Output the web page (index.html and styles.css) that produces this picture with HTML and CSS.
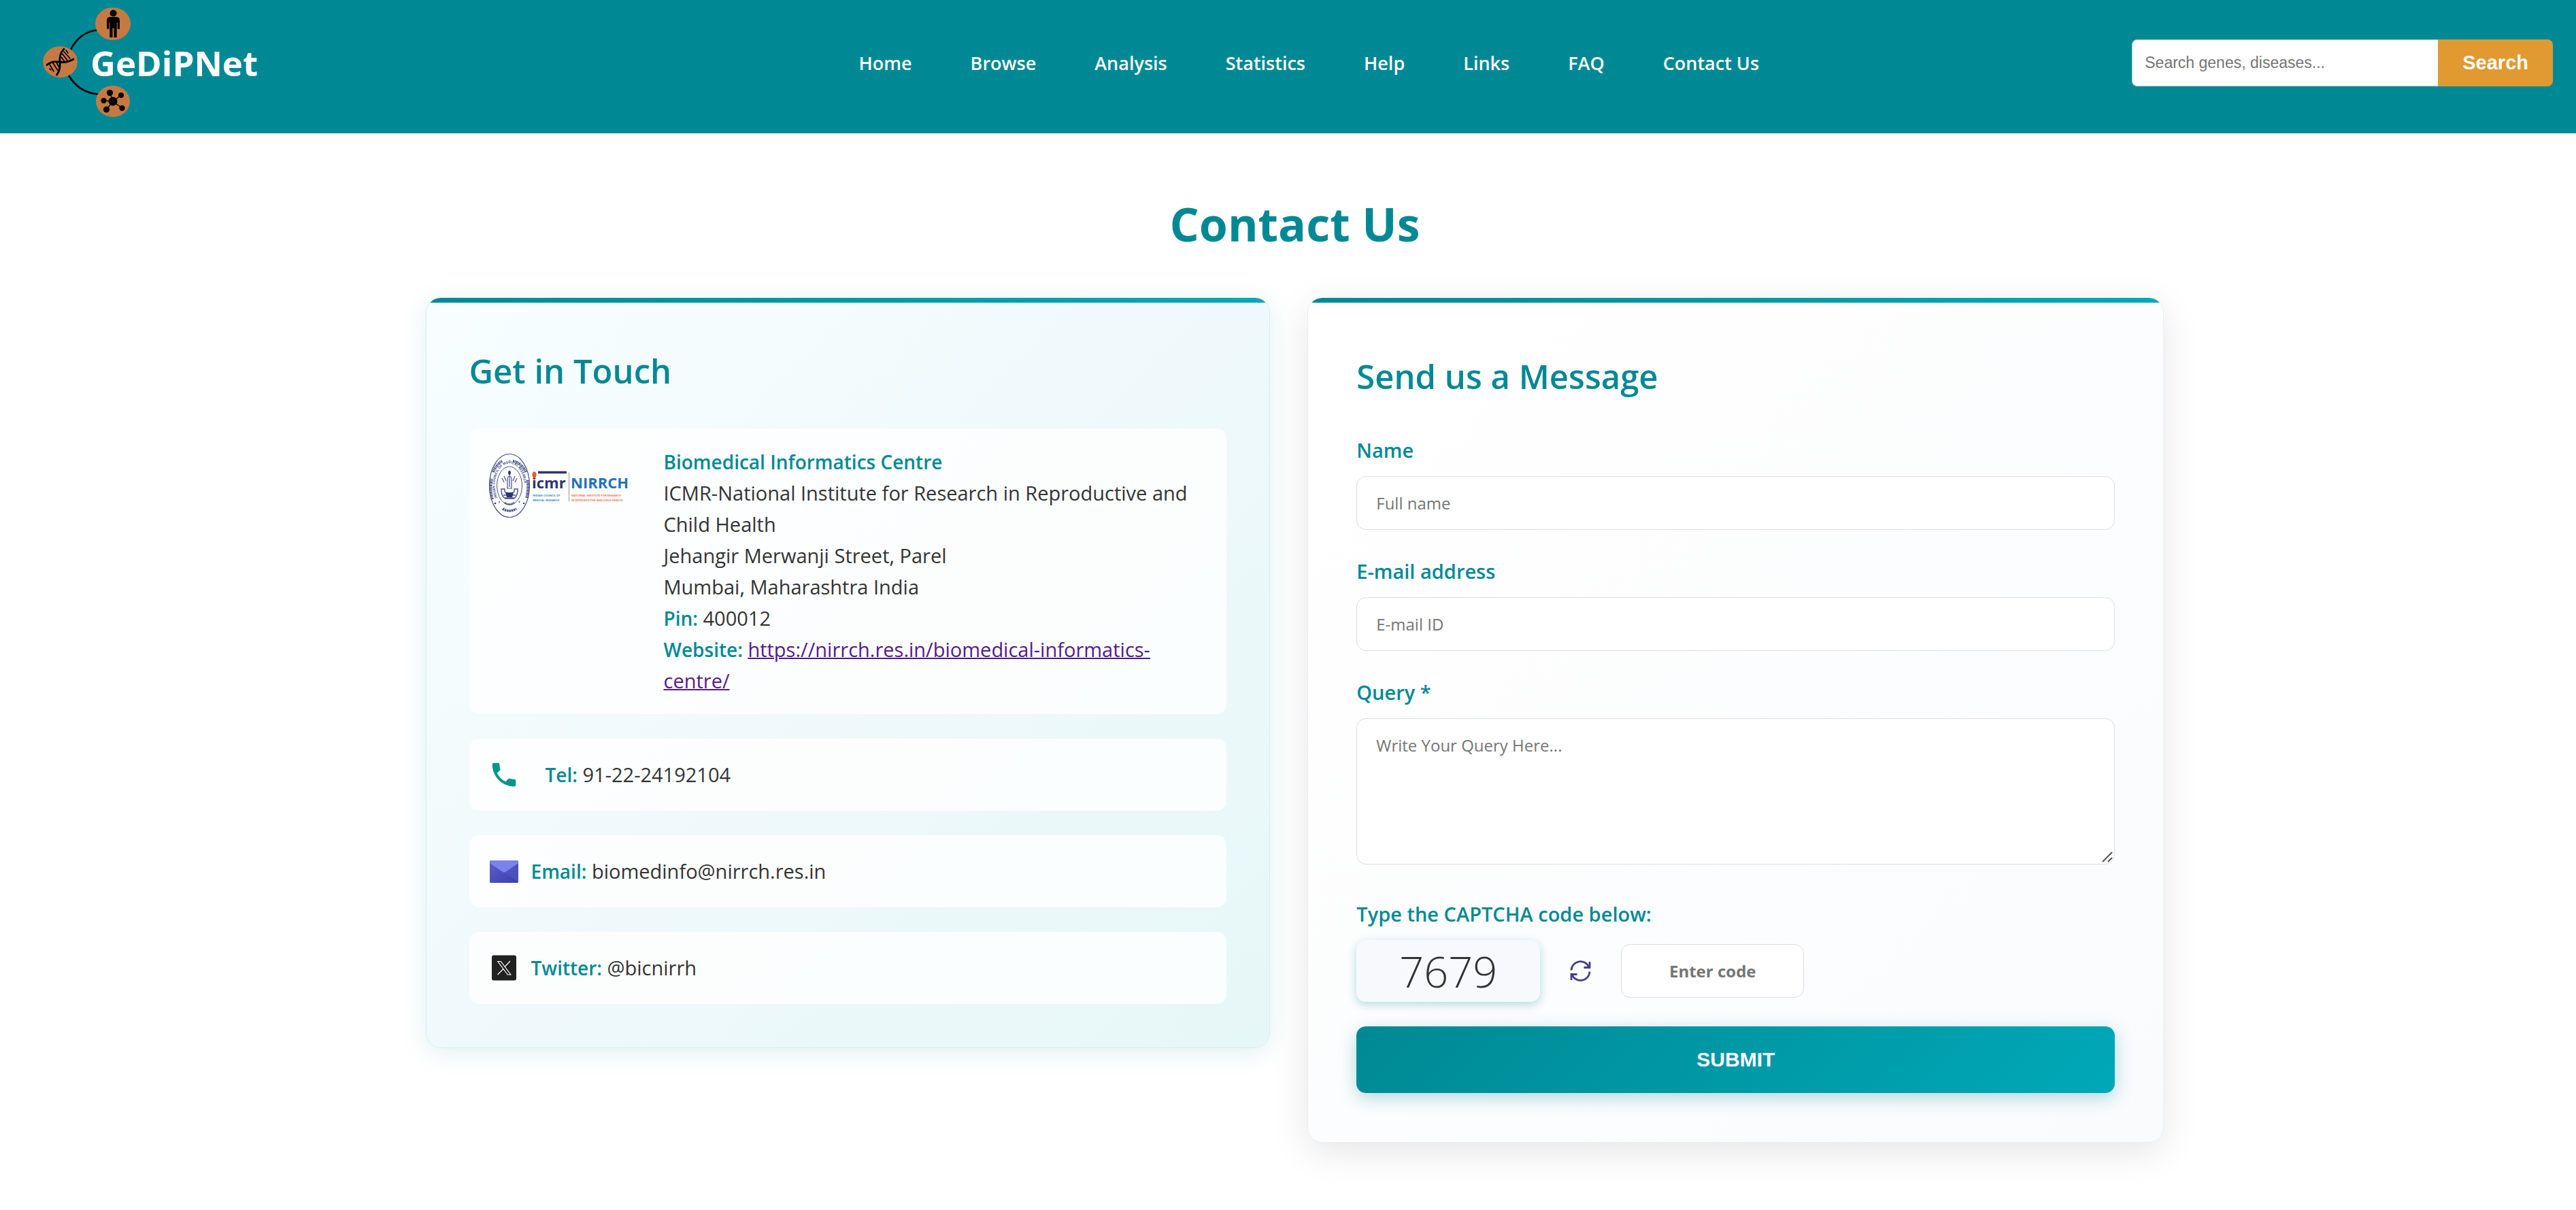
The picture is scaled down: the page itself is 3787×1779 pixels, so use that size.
FILE: index.html
```html
<!DOCTYPE html>
<html lang="en">
  <head>
    <meta charset="utf-8">
    <title>Contact Us - GeDiPNet</title>
    <link rel="stylesheet" href="styles.css">
  </head>
  <body>
    <header class="header">
      <a class="logo" href="#">
        <svg class="logo-img" viewBox="0 0 380 185">
          <g fill="none" stroke="#000" stroke-width="2.6">
            <path d="M64 73Q77 47 104 44"/>
            <path d="M61 111Q76 136 104 138.500"/>
          </g>
          <g fill="#c57a43">
            <ellipse cx="126" cy="35" rx="26" ry="24"/>
            <ellipse cx="48.500" cy="91" rx="25.500" ry="23"/>
            <ellipse cx="126" cy="149" rx="25" ry="23"/>
          </g>
          <!-- person -->
          <circle cx="126.500" cy="19.500" r="5"/>
          <path d="M122 25h9q5 0 5 5v12.500h-3.300V33h-1v22h-4.200V41.500h-2V55h-4.200V33h-1v9.500H117V30q0-5 5-5z"/>
          <!-- dna -->
          <g fill="none" stroke="#000" stroke-linecap="round">
            <path stroke-width="2.800" d="M54 72Q47 79 48 91T43.500 110M29 95.500Q36 89 47 91T68 87"/>
            <path stroke-width="1.600" d="M54 76l9 10M51.500 79l8.500 11M50 84l5 6.500M57 74l3 4M33 95l6 10M37.500 92l7 11M43 92l4 7M33 101l2 2"/>
          </g>
          <!-- network -->
          <path d="M126 149l-4.500-13M126 149l12-9M126 149l13.500 10M126 149l-9.500 12M126 149l-13.500-1" stroke="#000" stroke-width="1.400"/>
          <circle cx="126" cy="149" r="6.500"/>
          <circle cx="121.500" cy="136.500" r="4.600"/>
          <circle cx="138" cy="140" r="4"/>
          <circle cx="139.500" cy="159" r="4.200"/>
          <circle cx="116.500" cy="161" r="4.600"/>
          <circle cx="112.500" cy="148" r="4"/>
          <text class="logo-text" x="93" y="112">GeDiPNet</text>
        </svg>
      </a>
      <nav class="nav">
        <a href="#">Home</a>
        <a href="#">Browse</a>
        <a href="#">Analysis</a>
        <a href="#">Statistics</a>
        <a href="#">Help</a>
        <a href="#">Links</a>
        <a href="#">FAQ</a>
        <a href="#">Contact Us</a>
      </nav>
      <form class="search">
        <input type="text" placeholder="Search genes, diseases..." aria-label="Search genes, diseases">
        <button type="button">Search</button>
      </form>
    </header>

    <main class="main">
      <h1>Contact Us</h1>
      <div class="columns">
        <section class="card info">
          <h2>Get in Touch</h2>
          <div class="item address">
            <svg class="icmr" viewBox="0 0 213 110">
              <g fill="none" stroke="#4a4f86">
                <ellipse cx="31" cy="58" rx="29.500" ry="46.500" stroke-width="1.200"/>
                <ellipse cx="31" cy="58" rx="18.500" ry="28" stroke-width="1"/>
                <path d="M6 78A26 41 0 0 1 4.500 48M7 38A26 41 0 0 1 20 22M36 22A26 41 0 0 1 55 38M57.500 50A26 41 0 0 1 56 76" stroke-width="4" stroke-dasharray="2 .8 1.200 .8"/>
                <path d="M21 92Q31 98 41 92" stroke-width="3.500" stroke-dasharray="2.500 .8"/>
                <path d="M24 83Q31 88 38 83" stroke-width="3" stroke-dasharray="1.500 .8"/>
                <path d="M18 63h6v4q7 4 14 0v-4h6M19 64q0 10 6 13h12q6-3 6-13M22 72h18M24 76h14" stroke-width="1.400"/>
                <path d="M31 38v22M28 62v-12q0-6 3-6t3 6v12M27 62h8M20 47l3 6M23 44l3 7M42 47l-3 6M39 44l-3 7" stroke-width="1.200"/>
              </g>
              <g fill="#2f3470">
                <ellipse cx="31" cy="39" rx="2" ry="3"/>
                <circle cx="10" cy="84" r="1.300"/>
                <circle cx="52" cy="84" r="1.300"/>
                <circle cx="16" cy="82" r="1"/>
                <circle cx="45.500" cy="82" r="1"/>
                <path d="M25 68h12l-2 7h-8z"/>
              </g>
              <path id="ring" d="M13.500 76A21.500 32 0 1 1 48.500 76" fill="none"/>
              <text class="seal-text"><textPath href="#ring">INDIAN COUNCIL OF MEDICAL RESEARCH</textPath></text>
              <text class="icmr-text" x="64" y="62">icmr</text>
              <path d="M73 38.500h42" stroke="#2f3470" stroke-width="3.500"/>
              <ellipse cx="67.500" cy="42" rx="3" ry="4.500" fill="#f15a29"/>
              <path d="M118.500 38.500v43" stroke="#999" stroke-width="1"/>
              <text class="nirrch-text" x="121" y="62">NIRRCH</text>
              <g class="tiny blue">
                <text x="65" y="74">INDIAN COUNCIL OF</text>
                <text x="65" y="81">MEDICAL RESEARCH</text>
              </g>
              <g class="tiny orange">
                <text x="122" y="74">NATIONAL INSTITUTE FOR RESEARCH</text>
                <text x="122" y="81">IN REPRODUCTIVE AND CHILD HEALTH</text>
              </g>
            </svg>
            <p><strong>Biomedical Informatics Centre</strong><br>
              ICMR-National Institute for Research in Reproductive and Child Health<br>
              Jehangir Merwanji Street, Parel<br>
              Mumbai, Maharashtra India<br>
              <strong>Pin:</strong> 400012<br>
              <strong>Website:</strong> <a href="#">https://nirrch.res.in/biomedical-informatics-centre/</a></p>
          </div>
          <div class="item tel">
            <svg class="icon" viewBox="0 0 24 24" fill="#009688">
              <path d="M6.620 10.790c1.440 2.830 3.760 5.140 6.590 6.590l2.200-2.200c.27-.27.67-.36 1.020-.24 1.120.37 2.330.57 3.570.57.55 0 1 .45 1 1V20c0 .55-.45 1-1 1-9.390 0-17-7.610-17-17 0-.55.45-1 1-1h3.500c.55 0 1 .45 1 1 0 1.250.2 2.450.57 3.570.11.35.03.74-.25 1.020l-2.200 2.200z"/>
            </svg>
            <p><strong>Tel:</strong> 91-22-24192104</p>
          </div>
          <div class="item">
            <svg class="icon" viewBox="0 0 46 46">
              <defs>
                <linearGradient id="mail" x1="0" y1="0" x2="1" y2="1">
                  <stop offset="0" stop-color="#5a5fd0"/>
                  <stop offset="1" stop-color="#3a3fa8"/>
                </linearGradient>
              </defs>
              <rect x="2" y="7" width="42" height="33" rx="1.500" fill="url(#mail)"/>
              <path d="M23 24L44 39V11z" fill="#5055c4" opacity=".7"/>
              <path d="M2 11V8.500Q2 7 3.500 7h39Q44 7 44 8.500V11L25 24q-2 1.500-4 0z" fill="#7b83eb"/>
            </svg>
            <p><strong>Email:</strong> biomedinfo@nirrch.res.in</p>
          </div>
          <div class="item">
            <svg class="icon" viewBox="0 0 46 46">
              <rect x="5" y="4.500" width="36" height="37" rx="3" fill="#212121"/>
              <g fill="none" stroke="#fff" stroke-width="1.200">
                <path d="M13.800 13.500h4.500l14.500 19.500h-4.500z"/>
                <path d="M32 13L24 21.500M22 24.500L13.500 33"/>
              </g>
            </svg>
            <p><strong>Twitter:</strong> @bicnirrh</p>
          </div>
        </section>

        <section class="card message">
          <h2>Send us a Message</h2>
          <form>
            <div class="field">
              <label for="name">Name</label>
              <input type="text" id="name" placeholder="Full name">
            </div>
            <div class="field">
              <label for="email">E-mail address</label>
              <input type="email" id="email" placeholder="E-mail ID">
            </div>
            <div class="field query">
              <label for="query">Query *</label>
              <div class="textarea-wrap">
                <textarea id="query" placeholder="Write Your Query Here..."></textarea>
                <svg class="grip" viewBox="0 0 16 16" stroke="#555" stroke-width="2" stroke-linecap="round">
                  <path d="M1.500 14.500L14.500 1.500M9.500 14.500L14.500 9.500"/>
                </svg>
              </div>
            </div>
            <div class="field">
              <label for="code">Type the CAPTCHA code below:</label>
              <div class="captcha">
                <span class="captcha-code">7679</span>
                <button type="button" class="refresh" aria-label="Refresh code">
                  <svg viewBox="0 0 31 31" fill="none" stroke="#483d8b" stroke-width="2.800">
                    <path d="M2 14.500A13.500 13.500 0 0 1 28 10M29 16.500A13.500 13.500 0 0 1 3 21"/>
                    <path d="M29 2v8.500h-8.500M2 29v-8.500h8.500"/>
                  </svg>
                </button>
                <input type="text" id="code" placeholder="Enter code">
              </div>
            </div>
            <button type="button" class="submit">SUBMIT</button>
          </form>
        </section>
      </div>
    </main>
  </body>
</html>
```

FILE: styles.css
```css
* {
  box-sizing: border-box;
}
body {
  margin: 0;
  background-color: #fff;
  color: #333;
  font-family: "Open Sans", "Noto Sans", sans-serif;
  font-size: 29px;
  line-height: 46px;
}
.header {
  display: grid;
  grid-template-columns: 22fr auto 21fr;
  align-items: center;
  background-color: #008994;
  padding: 0 34px 11px 40px;
}
.logo {
  display: block;
}
.logo-img {
  display: block;
  width: 380px;
}
.logo-text {
  fill: #fff;
  font-size: 51px;
  font-weight: 700;
}
.nav {
  display: flex;
  gap: 86px;
}
.nav a {
  color: #fff;
  font-size: 27px;
  font-weight: 600;
  text-decoration: none;
}
.search {
  display: flex;
  justify-content: flex-end;
}
.search input {
  width: 450px;
  height: 69px;
  padding: 0 18px;
  border: 1px solid #ccc;
  border-right: none;
  border-radius: 8px 0 0 8px;
  outline: 0;
  font-family: "Liberation Sans", sans-serif;
  font-size: 23px;
}
.search button {
  padding: 0 36px;
  border: none;
  border-radius: 0 8px 8px 0;
  background-color: #e19932;
  color: #fff;
  font-family: "Liberation Sans", sans-serif;
  font-size: 29px;
  font-weight: 700;
  cursor: pointer;
}
.main {
  max-width: 2576px;
  margin: 0 auto;
  padding: 87px 0 98px 20px;
}
h1 {
  margin: 0 0 62px;
  color: #008994;
  font-size: 68px;
  line-height: 92px;
  text-align: center;
}
h2 {
  margin: 0;
  color: #008994;
  font-size: 49px;
  font-weight: 600;
  line-height: 86px;
}
p {
  margin: 0;
}
.columns {
  display: grid;
  grid-template-columns: 71fr 72fr;
  align-items: start;
  gap: 55px;
}
.card {
  position: relative;
  overflow: hidden;
  border-radius: 22px;
}
.card::before {
  content: "";
  position: absolute;
  top: 0;
  left: 0;
  right: 0;
  height: 7px;
  background: linear-gradient(90deg, #008994, #00a8b8);
}
.info {
  padding: 64px 63px;
  border: 1px solid #d5efef;
  background: linear-gradient(135deg, #f8feff 0%, #eff9fb 50%, #e6f7f8 100%);
  box-shadow: 0 7px 36px rgba(0, 137, 148, 0.12);
}
.info h2 {
  margin-bottom: 42px;
}
.item {
  display: flex;
  align-items: center;
  gap: 17px;
  min-height: 106px;
  margin-bottom: 36px;
  padding: 26px 28px;
  border-radius: 14px;
  background-color: rgba(255, 255, 255, 0.8);
}
.item:last-child {
  margin-bottom: 0;
}
.item strong {
  color: #008994;
  font-size: 28px;
  font-weight: 600;
}
.item a {
  color: #551a8b;
  text-decoration-thickness: 2px;
}
.address {
  align-items: flex-start;
  gap: 45px;
}
.tel {
  gap: 38px;
}
.icon {
  flex: none;
  width: 46px;
}
.icmr {
  flex: none;
  width: 213px;
}
.seal-text {
  fill: #4a4f86;
  font-size: 5px;
  font-weight: 700;
}
.icmr-text {
  fill: #2f3470;
  font-size: 22px;
  font-weight: 700;
}
.nirrch-text {
  fill: #2273ba;
  font-size: 22px;
  font-weight: 700;
}
.tiny {
  font-size: 4px;
  font-weight: 700;
}
.blue {
  fill: #3a87c4;
}
.orange {
  fill: #f4714a;
}
.message {
  padding: 72px 71px;
  border: 1px solid #e3f2f2;
  background: linear-gradient(135deg, #fff 0%, #fafbfd 100%);
  box-shadow: 0 14px 54px rgba(0, 0, 0, 0.1);
}
.message h2 {
  margin-bottom: 43px;
}
.field {
  margin-bottom: 38px;
}
.query {
  margin-bottom: 50px;
}
.field:nth-last-child(2) {
  margin-bottom: 36px;
}
.field label {
  display: block;
  margin-bottom: 15px;
  color: #008994;
  font-size: 29px;
  font-weight: 600;
}
.field input,
.field textarea {
  display: block;
  width: 100%;
  padding: 21px 28px;
  border: 1px solid #ddd;
  border-radius: 14px;
  outline: 0;
  background-color: #fff;
  color: #333;
  font-family: inherit;
  font-size: 24px;
  line-height: 35px;
}
.field input {
  height: 79px;
}
.field textarea {
  height: 215px;
  resize: vertical;
}
.field textarea::-webkit-resizer {
  background: transparent;
}
.textarea-wrap {
  position: relative;
}
.grip {
  position: absolute;
  right: 3px;
  bottom: 3px;
  width: 16px;
  pointer-events: none;
}
.captcha {
  display: flex;
  align-items: center;
  gap: 44px;
}
.captcha-code {
  width: 270px;
  border-radius: 14px;
  background-color: #f8f9fc;
  box-shadow: 0 4px 14px rgba(0, 137, 148, 0.3);
  font-size: 63px;
  font-weight: 300;
  line-height: 91px;
  text-align: center;
}
.refresh {
  width: 31px;
  padding: 0;
  border: none;
  background: none;
  cursor: pointer;
}
.refresh svg {
  display: block;
}
.captcha input {
  width: 269px;
  font-weight: 700;
  text-align: center;
}
.submit {
  display: block;
  width: 100%;
  height: 98px;
  border: none;
  border-radius: 14px;
  background: linear-gradient(135deg, #008994, #00a8b8);
  box-shadow: 0 7px 27px rgba(0, 137, 148, 0.3);
  color: #fff;
  font-family: "Liberation Sans", sans-serif;
  font-size: 30px;
  font-weight: 700;
  cursor: pointer;
}
```
